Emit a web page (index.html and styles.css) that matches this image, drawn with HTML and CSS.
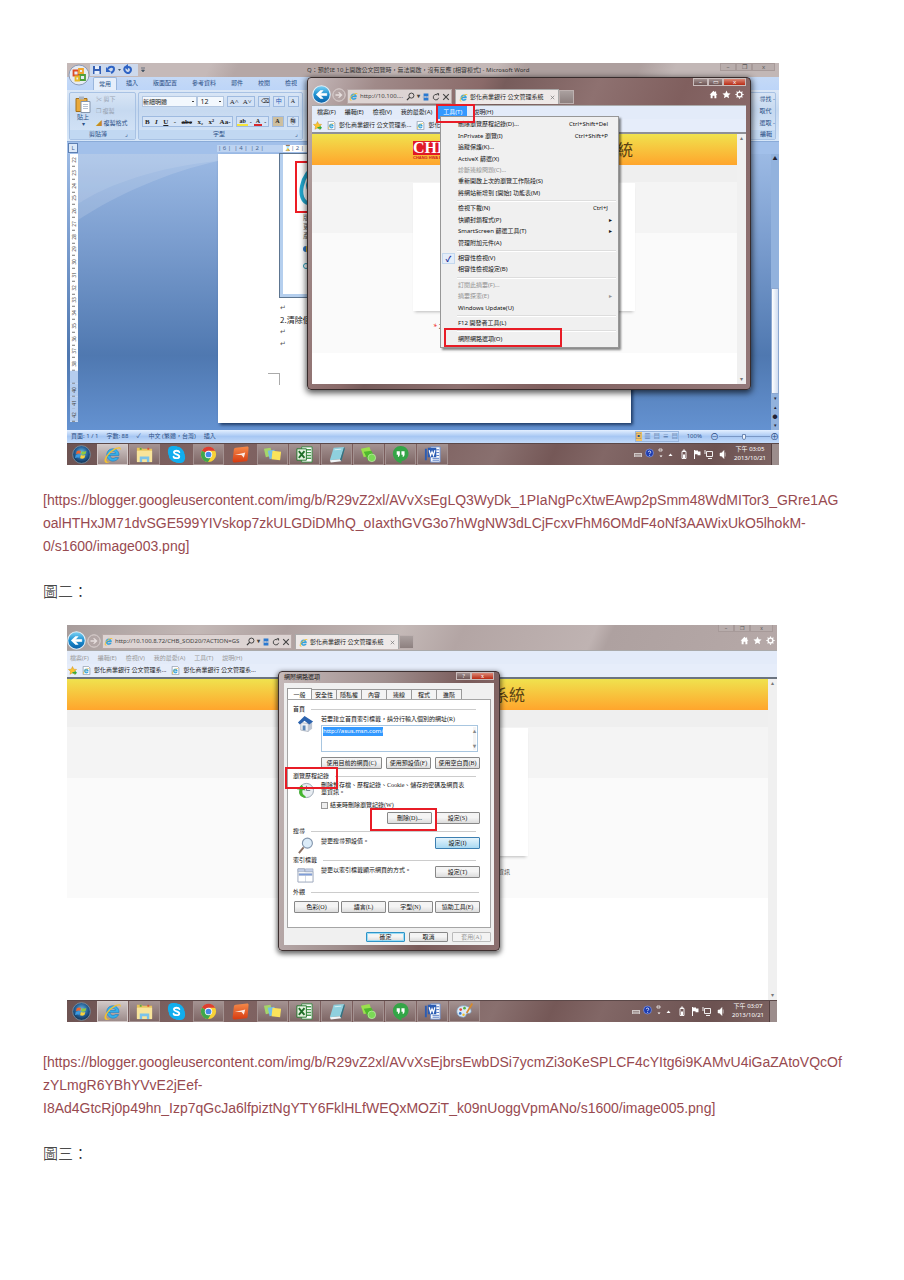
FILE: index.html
```html
<!DOCTYPE html>
<html lang="zh-Hant">
<head>
<meta charset="utf-8">
<title>公文管理系統 設定說明</title>
<link rel="stylesheet" href="styles.css">
</head>
<body>
<svg class="defs" aria-hidden="true">
  <defs>
    <linearGradient id="gb" x1="0" y1="0" x2="0" y2="1"><stop offset="0" stop-color="#7fd4f5"/><stop offset=".5" stop-color="#1c8fd0"/><stop offset="1" stop-color="#0b5fa8"/></linearGradient>
    <radialGradient id="go" cx=".5" cy=".4" r=".6"><stop offset="0" stop-color="#6fc0e8"/><stop offset=".6" stop-color="#235d94"/><stop offset="1" stop-color="#12304f"/></radialGradient>
    <linearGradient id="gr" x1="0" y1="0" x2="0" y2="1"><stop offset="0" stop-color="#f58a4a"/><stop offset="1" stop-color="#d63a10"/></linearGradient>
  </defs>
  <symbol id="ie" viewBox="0 0 20 20"><path d="M4.2 11h12.6c.3-4-2.5-7-6.500-7S4 7 4 10.500 6.800 17 10.500 17c2.800 0 5-1.500 6-3.800h-3.700c-.6.7-1.300 1-2.300 1-1.700 0-2.900-1.200-3-3.200M7.600 8.800c.3-1.400 1.400-2.200 2.800-2.200s2.500.8 2.700 2.200z" fill="#35b0ea" stroke="#1b78be" stroke-width=".6" fill-rule="evenodd"/><path d="M2.500 18.500C-1 16 6 6 14 3c3-1.200 5.500-.8 4.300 2.500C18.200 2.800 15 3.400 11 6 5 10 1.500 16 4.500 17.500c1 .5 2.700-.2 4-1-2.400 2-4.600 2.900-6 2z" fill="#f5c22c"/></symbol>
  <symbol id="favpage" viewBox="0 0 12 12"><path d="M1.500.5h7l2 2v9h-9z" fill="#fff" stroke="#8a97a8"/><use href="#ie" x="1" y="2" width="9" height="9"/></symbol>
  <symbol id="star" viewBox="0 0 12 12"><path d="M6 .7l1.600 3.500 3.800.4-2.800 2.600.8 3.800L6 9.100 2.600 11l.8-3.800L.6 4.600l3.800-.4z" fill="currentColor"/></symbol>
  <symbol id="favadd" viewBox="0 0 12 12"><path d="M6 .7l1.600 3.500 3.800.4-2.800 2.600.8 3.800L6 9.100 2.600 11l.8-3.800L.6 4.600l3.800-.4z" fill="#fbc52d" stroke="#d28d12" stroke-width=".6"/><path d="M6 8h3V6l3 3-3 3v-2H6z" fill="#35ab3b"/></symbol>
  <symbol id="home" viewBox="0 0 12 12"><path d="M6 1L.8 6.200h1.400V11h2.600V7.500h2.400V11h2.600V6.200h1.400L9.500 4.400V2H8v1z" fill="currentColor"/></symbol>
  <symbol id="gear" viewBox="0 0 12 12"><circle cx="6" cy="6" r="3.200" fill="none" stroke="currentColor" stroke-width="1.800"/><path d="M6 .5v2M6 9.500v2M.5 6h2M9.500 6h2M2.100 2.100l1.400 1.400M8.500 8.500l1.400 1.400M9.900 2.100L8.500 3.500M3.500 8.500L2.100 9.900" stroke="currentColor" stroke-width="1.500"/></symbol>
  <symbol id="back" viewBox="0 0 18 18"><circle cx="9" cy="9" r="8.300" fill="url(#gb)" stroke="#e3eef6" stroke-width="1"/><path d="M14 8H8l2.500-2.700H8L4 9l4 3.700h2.500L8 10h6z" fill="#fff" stroke="#fff" stroke-width=".6"/></symbol>
  <symbol id="fwd" viewBox="0 0 14 14"><circle cx="7" cy="7" r="6.200" fill="#b8aaa9" fill-opacity=".5" stroke="#ddd3d2"/><path d="M3.500 6.300h4.200L6 4.200h1.600L10.500 7 7.600 9.800H6l1.700-2.100H3.500z" fill="#e6dedd"/></symbol>
  <symbol id="search" viewBox="0 0 10 10"><circle cx="6" cy="4" r="2.800" fill="none" stroke="#333"/><path d="M4 6L1 9" stroke="#333" stroke-width="1.300"/></symbol>
  <symbol id="compat" viewBox="0 0 10 10"><path d="M2 .5h6v3.700H2zM2 5.800h6v3.700H2z" fill="#2b79d0"/><path d="M1 5h8" stroke="#2b79d0" stroke-dasharray="1 1"/></symbol>
  <symbol id="reload" viewBox="0 0 10 10"><path d="M8.300 6A3.400 3.400 0 1 1 6.500 2.200" fill="none" stroke="#444" stroke-width="1.200"/><path d="M5.500.3h3.300v3.300z" fill="#444"/></symbol>
  <symbol id="x" viewBox="0 0 10 10"><path d="M1.500 1.500l7 7M8.500 1.500l-7 7" stroke="currentColor" stroke-width="1.400"/></symbol>
  <symbol id="orb" viewBox="0 0 20 20"><circle cx="10" cy="10" r="9.300" fill="url(#go)" stroke="#7e99ac" stroke-width=".8"/><path d="M5 6.500c1.700-1 3-.9 4.500-.2L8.700 9.500c-1.500-.7-2.800-.6-4.500.2z" fill="#ee6531"/><path d="M10.300 6.600c1.600.7 3 .6 4.800-.3l-.9 3.300c-1.700.8-3 .9-4.600.2z" fill="#8fca3c"/><path d="M4 10.500c1.700-.8 3-.9 4.500-.2l-.8 3.300c-1.500-.7-3-.6-4.600.2z" fill="#3c9be2"/><path d="M9.300 10.600c1.500.7 3 .6 4.700-.2l-.9 3.300c-1.600.8-3 .9-4.600.2z" fill="#fbd13b"/></symbol>
  <symbol id="office" viewBox="0 0 22 22"><circle cx="11" cy="11" r="10" fill="#e6ebf3" stroke="#8c9cb8"/><g fill="none" stroke-width="1.800"><path d="M5.500 6.500h5v5h-5z" stroke="#dd4a24"/><path d="M11 5h4v4h-4z" stroke="#f0a32c"/><path d="M12 11h5v5h-5z" stroke="#4e9f3a"/><path d="M7.500 12.500h3.500v4H7.500z" stroke="#e6b927"/></g></symbol>
  <symbol id="folder" viewBox="0 0 20 20"><path d="M2 3h5l1 1h10v13H2z" fill="#e9c45d"/><path d="M2 6h16v12H2z" fill="#f8e49b"/><path d="M5 3h2v2H5z" fill="#5aa544"/><path d="M13 3h2v2h-2z" fill="#d4523a"/><path d="M5 18v-6h10v6h-2.500v-3h-5v3z" fill="#7cc3ea"/></symbol>
  <symbol id="skype" viewBox="0 0 20 20"><rect x="1" y="1" width="12" height="12" rx="5" fill="#11aeee"/><rect x="7" y="7" width="12" height="12" rx="5" fill="#11aeee"/><circle cx="10" cy="10" r="8.300" fill="#11aeee"/><path d="M13 7.500C12.500 5.700 7.300 5.400 7.300 7.800c0 2.400 5.600 1.500 5.600 4.200 0 2.600-5.500 2.300-6 .3" fill="none" stroke="#fff" stroke-width="1.900" stroke-linecap="round"/></symbol>
  <symbol id="chrome" viewBox="0 0 20 20"><circle cx="10" cy="10" r="8" fill="#f7d137"/><path d="M10 10L3.100 6A8 8 0 0 1 17 6H10z" fill="#de3e32"/><path d="M3.100 6A8 8 0 0 0 9.500 18L13 12l-3-2z" fill="#3fa64c"/><circle cx="10" cy="10" r="3.900" fill="#fff"/><circle cx="10" cy="10" r="3" fill="#4589e8"/></symbol>
  <symbol id="redapp" viewBox="0 0 20 20"><path d="M5 3l12-1.500c1.200 0 1.500.6 1.500 1.500l-1 12.500c-.1 1-.6 1.500-1.500 1.600L4 18.500c-1.500 0-2.500-1-2.300-2.500L3 5c.2-1.200.8-1.900 2-2z" fill="url(#gr)"/><path d="M4 10.500l11-2.500-1.500 5.500-2.500-3z" fill="#fff" fill-opacity=".85"/></symbol>
  <symbol id="notes" viewBox="0 0 20 20"><path d="M1 4l7-1 2 8-7 2z" fill="#a5d66a"/><path d="M5 6l7-1 2 8-7 2z" fill="#75bde7"/><path d="M10 6l9 1-1 9-9-1z" fill="#fbe35b"/></symbol>
  <symbol id="excel" viewBox="0 0 20 20"><path d="M7 2h11v16H7z" fill="#fff" stroke="#3a8a42"/><path d="M12 5h5M12 8h5M12 11h5M12 14h5" stroke="#4a9e50" stroke-width="1.500"/><path d="M2 4h10v12H2z" fill="#e4f3df" stroke="#26752e"/><path d="M4 6.500l6 7M10 6.500l-6 7" stroke="#1f6e28" stroke-width="2"/></symbol>
  <symbol id="book" viewBox="0 0 20 20"><path d="M7 3l11-1-4 13-11 1z" fill="#8fd0de"/><path d="M3 16l11-1 1 2-11 1.500z" fill="#f1f6f8"/><path d="M14 15l4-13 .8 2L15 17z" fill="#2f7485"/><path d="M8 5l7-.6" stroke="#d6f0f5"/></symbol>
  <symbol id="green" viewBox="0 0 20 20"><path d="M2 4l9-2 3 8-9 3z" fill="#9be04d"/><path d="M5 7l8-1 4 7-7 4z" fill="#50b92e"/><circle cx="13.500" cy="13.500" r="4" fill="#7cd957" stroke="#c6f2b0" stroke-width=".7"/></symbol>
  <symbol id="hang" viewBox="0 0 20 20"><path d="M10 1a8 8 0 0 1 1 16v2.500C6 18 2 14 2 9A8 8 0 0 1 10 1z" fill="#34a547"/><path d="M6 6.500h3.300v3.400c0 1.300-.8 2.300-2 2.700v-2.300H6zM11 6.500h3.300v3.400c0 1.300-.8 2.300-2 2.700v-2.300H11z" fill="#fff"/></symbol>
  <symbol id="word" viewBox="0 0 20 20"><path d="M8 2h10v16H8z" fill="#fff" stroke="#6f8fce"/><path d="M14 5h3M14 8h3M14 11h3M10 14h7M10 16h7" stroke="#4a74c4"/><path d="M2 4h2v12H2zM5 3h9v10H5z" fill="#2b5cb3"/><path d="M6.500 5.500L8 11l1.500-4L11 11l1.500-5.500" fill="none" stroke="#fff" stroke-width="1.300"/></symbol>
  <symbol id="paint" viewBox="0 0 20 20"><path d="M9 4c5 0 8 2.500 8 6 0 2-2 2-4 2s-1 4-4 4c-4 0-7-2-7-6s3-6 7-6z" fill="#dceaf6" stroke="#7da3c5" stroke-width=".8"/><circle cx="6" cy="8" r="1.400" fill="#e04b34"/><circle cx="10" cy="6.500" r="1.400" fill="#52ad41"/><circle cx="5.500" cy="12" r="1.400" fill="#3576cc"/><circle cx="9" cy="13.500" r="1.300" fill="#efbe2e"/><path d="M17.500 1l1.500 1-6 10-1.500-1z" fill="#d78a2b"/></symbol>
  <symbol id="tray" viewBox="0 0 92 12"><path d="M0 5h8v4H0z" fill="#cfc7c6"/><path d="M1 6.500h6M1 8h6" stroke="#7d6b6a" stroke-width=".6"/><circle cx="15.500" cy="5" r="4" fill="#1c3bb0" stroke="#93a8e8" stroke-width=".6"/><path d="M14.300 4.200c0-1.700 2.500-1.500 2.500 0 0 .9-1.200.8-1.200 2M15.600 7v.8" stroke="#fff" fill="none" stroke-width=".8"/><path d="M25 1h3v2h-3z" fill="none" stroke="#fff" stroke-width=".7"/><path d="M25.500 7.500h3L27 9.300z" fill="#fff"/><path d="M34.500 8h4L36.500 5.500z" fill="#fff"/><path d="M48 3.500h4v7h-4zM49.200 2h1.600v1.500h-1.600z" fill="none" stroke="#fff" stroke-width=".9"/><path d="M49 6.500h2V10h-2z" fill="#fff"/><path d="M60.500 2v9" stroke="#fff"/><path d="M61 2.500h3v1h2.500v3.700h-3v-1H61z" fill="#fff"/><path d="M72.500 3.500h6v5h-6zM74 10.500h4M71 2v4" fill="none" stroke="#fff" stroke-width=".9"/><path d="M86 5h1.500l2.500-2.500v8L87.500 8H86zM91.200 4.500v4" fill="#fff" stroke="#fff" stroke-width=".5"/></symbol>
</svg>

<main class="article">
  <figure class="shot">
    <div class="desktop">
      <section class="word">
        <header class="word-title">
          <span class="quick"><svg viewBox="0 0 60 12"><path d="M3 2h8v8H3z" fill="#3560b5"/><path d="M5 2h4v3H5zM4.500 7h5v3h-5z" fill="#e6eefb"/><path d="M18 5c1-3 6-3 6 0 0 2-1 3-3 4" fill="none" stroke="#2e63c4" stroke-width="2"/><path d="M16 3v5h5z" fill="#2e63c4"/><path d="M28 5h3l-1.500 2z" fill="#456"/><path d="M35 3c-3 5 5 9 6 3 0-2-1-3-3-3" fill="none" stroke="#2e63c4" stroke-width="2"/><path d="M38 0v6l-4-3z" fill="#2e63c4"/><path d="M51 4h4M51.500 6h3L53 8z" stroke="#456" stroke-width=".7" fill="#456"/></svg></span>
          <span class="word-name">Q：預於IE 10上開啟公文回覽時，無法開啟，沒有反應 [相容模式] - Microsoft Word</span>
          <span class="caps faint"><button aria-label="最小化">–</button><button aria-label="還原">❐</button><button aria-label="關閉">x</button></span>
        </header>
        <svg class="office"><use href="#office"/></svg>
        <nav class="word-tabs"><button class="on">常用</button><button>插入</button><button>版面配置</button><button>參考資料</button><button>郵件</button><button>校閱</button><button>檢視</button></nav>
        <div class="ribbon">
          <div class="group clip">
            <div class="group-main">
              <button class="paste"><svg viewBox="0 0 16 18"><path d="M1 3h11v13H1z" fill="#e9a93b" stroke="#a4711b"/><path d="M4 1h5v3H4z" fill="#aab5c4"/><path d="M6 6h9v11H6z" fill="#fff" stroke="#8394ac"/><path d="M8 9h5M8 11h5M8 13h5" stroke="#98a8c0" stroke-width=".7"/></svg>貼上<i>▾</i></button>
              <div class="stack"><button disabled>✂ 剪下</button><button disabled>❐ 複製</button><button><b class="brush">◢</b> 複製格式</button></div>
            </div>
            <div class="group-name">剪貼簿<i>⌟</i></div>
          </div>
          <div class="group font">
            <div class="group-main rows">
              <div class="tools"><select class="face" aria-label="字型"><option>新細明體</option></select><select class="size" aria-label="字型大小"><option>12</option></select><span class="set big"><button>A˄</button><button>A˅</button></span><button class="box">⌫</button><button class="box blue">中</button><button class="box">A</button></div>
              <div class="tools serif"><span class="set wide"><button>B</button><button><em>I</em></button><button><u>U</u></button><button>-</button><button><s>abc</s></button><button>x₂</button><button>x²</button><button>Aa-</button></span><span class="set"><button class="hl">ab</button><button>-</button><button class="fc">A</button><button>-</button></span><button class="box shade">A</button><button class="box">㊕</button></div>
            </div>
            <div class="group-name">字型<i>⌟</i></div>
          </div>
          <div class="group edit"><div class="stack"><button>尋找 -</button><button>取代</button><button>選取 -</button></div><div class="group-name">編輯</div></div>
        </div>
        <div class="ruler"><span class="corner">L</span><span class="marks">| 6 | &nbsp;| 4 | &nbsp;| 2 |</span><span class="marks white">⌛| 2 |</span></div>
        <div class="work">
          <div class="vruler"><span>22</span><span>23</span><span>24</span><span>25</span><span>26</span><span>27</span><span>28</span><span>29</span><span>30</span><span>31</span><span>32</span><span>33</span><span>34</span><span>35</span><span>36</span><span>37</span><span>38</span><span class="off"></span><span class="off">40</span><span class="off">41</span><span class="off">42</span></div>
          <svg class="swoosh" viewBox="0 0 140 276" preserveAspectRatio="none"><path d="M0 0H140V7C90 18 40 40 0 66z" fill="#fff" fill-opacity=".14"/><path d="M0 0H140V7C80 13 30 30 0 50z" fill="#fff" fill-opacity=".1"/></svg>
          <div class="page">
            <div class="inset"><div class="mark"><svg viewBox="0 0 20 50"><path d="M20 4C4 8-2 40 12 42c4 0 7-3 8-6M20 14C10 14 6 32 20 28" fill="none" stroke="#22a6cc" stroke-width="4"/></svg></div><p>版<br>更<br>產</p><i class="shield"></i><i class="ring"></i></div>
            <p class="ret">↵</p><p class="step">2.清除個人</p><p class="ret">↵</p><p class="ret">↵</p><i class="edge"></i>
          </div>
          <div class="vscroll"><span>▲</span><i></i><span>▾</span><span>▴</span><span>●</span><span>▾</span></div>
        </div>
        <footer class="status"><span>頁面: 1 / 1</span><span>字數: 88</span><span>✓</span><span>中文 (繁體，台灣)</span><span class="last">插入</span><span class="views"><i class="sel">▣</i><i>▥</i><i>▤</i><i>≡</i><i>▤</i></span><span class="pct">100%</span><label class="zoom">⊖<input type="range" aria-label="顯示比例" value="50">⊕</label></footer>
      </section>

      <section class="ie float">
        <div class="caps"><button aria-label="最小化">–</button><button aria-label="最大化">▭</button><button class="close" aria-label="關閉">x</button></div>
        <header class="ie-nav">
          <button class="bk" aria-label="上一頁"><svg><use href="#back"/></svg></button><button class="fw" aria-label="下一頁"><svg><use href="#fwd"/></svg></button>
          <label class="addr short"><svg><use href="#ie"/></svg><input aria-label="網址" value="http://10.100...."><svg><use href="#search"/></svg><b>▾</b><svg><use href="#compat"/></svg><svg><use href="#reload"/></svg><svg class="dk"><use href="#x"/></svg></label>
          <button class="tab"><svg><use href="#ie"/></svg>彰化商業銀行 公文管理系統<svg class="tx"><use href="#x"/></svg></button><button class="newtab" aria-label="新索引標籤"></button>
          <span class="cmds"><svg><use href="#home"/></svg><svg><use href="#star"/></svg><svg><use href="#gear"/></svg></span>
        </header>
        <nav class="ie-menu"><button>檔案(F)</button><button>編輯(E)</button><button>檢視(V)</button><button>我的最愛(A)</button><button class="on">工具(T)</button><button>說明(H)</button></nav>
        <div class="favs"><svg><use href="#favadd"/></svg><a href="#a"><svg><use href="#favpage"/></svg>彰化商業銀行 公文管理系...</a><a href="#b"><svg><use href="#favpage"/></svg>彰化</a></div>
        <div class="view">
          <div class="site"><div class="banner"><div class="logo"><b>CHB</b><small>CHANG HWA BANK</small></div><h1>統</h1></div><div class="band"></div><div class="mid"><div class="card"></div></div><div class="low"><span class="note"><em>*</em> 2</span></div></div>
          <div class="scroll"><span>▴</span><span>▾</span></div>
        </div>
      </section>

      <ul class="drop float">
        <li><span>刪除瀏覽歷程記錄(D)...</span><kbd>Ctrl+Shift+Del</kbd></li>
        <li><span>InPrivate 瀏覽(I)</span><kbd>Ctrl+Shift+P</kbd></li>
        <li><span>追蹤保護(K)...</span></li>
        <li><span>ActiveX 篩選(X)</span></li>
        <li class="dis"><span>診斷連線問題(C)...</span></li>
        <li><span>重新開啟上次的瀏覽工作階段(S)</span></li>
        <li><span>將網站新增到 [開始] 功能表(M)</span></li>
        <li class="sep"></li>
        <li><span>檢視下載(N)</span><kbd>Ctrl+J</kbd></li>
        <li class="sub"><span>快顯封鎖程式(P)</span></li>
        <li class="sub"><span>SmartScreen 篩選工具(T)</span></li>
        <li><span>管理附加元件(A)</span></li>
        <li class="sep"></li>
        <li class="check"><span>相容性檢視(V)</span></li>
        <li><span>相容性檢視設定(B)</span></li>
        <li class="sep"></li>
        <li class="dis"><span>訂閱此摘要(F)...</span></li>
        <li class="dis sub"><span>摘要探索(E)</span></li>
        <li><span>Windows Update(U)</span></li>
        <li class="sep"></li>
        <li><span>F12 開發者工具(L)</span></li>
        <li class="sep"></li>
        <li><span>網際網路選項(O)</span></li>
      </ul>
      <i class="red r1"></i><i class="red r2"></i>
    </div>
    <footer class="taskbar">
      <svg class="t start"><use href="#orb"/></svg><svg class="t act"><use href="#ie"/></svg><svg class="t run"><use href="#folder"/></svg><svg class="t"><use href="#skype"/></svg><svg class="t run"><use href="#chrome"/></svg><svg class="t"><use href="#redapp"/></svg><svg class="t run"><use href="#notes"/></svg><svg class="t run"><use href="#excel"/></svg><svg class="t run"><use href="#book"/></svg><svg class="t run"><use href="#green"/></svg><svg class="t run"><use href="#hang"/></svg><svg class="t run"><use href="#word"/></svg>
      <svg class="tray"><use href="#tray"/></svg><time>下午 03:05<br>2013/10/21</time><i class="show"></i>
    </footer>
  </figure>

  <p class="url"><a href="#image003">[https://blogger.googleusercontent.com/img/b/R29vZ2xl/AVvXsEgLQ3WyDk_1PIaNgPcXtwEAwp2pSmm48WdMITor3_GRre1AG<br>oalHTHxJM71dvSGE599YIVskop7zkULGDiDMhQ_oIaxthGVG3o7hWgNW3dLCjFcxvFhM6OMdF4oNf3AAWixUkO5lhokM-<br>0/s1600/image003.png]</a></p>
  <p class="cap">圖二：</p>

  <figure class="shot second">
    <div class="desktop full">
      <section class="ie max">
        <div class="caps faint"><button aria-label="最小化">–</button><button aria-label="還原">❐</button><button aria-label="關閉">x</button></div>
        <header class="ie-nav">
          <button class="bk" aria-label="上一頁"><svg><use href="#back"/></svg></button><button class="fw" aria-label="下一頁"><svg><use href="#fwd"/></svg></button>
          <label class="addr"><svg><use href="#ie"/></svg><input aria-label="網址" value="http://10.100.8.72/CHB_SOD20/?ACTION=GS"><svg><use href="#search"/></svg><b>▾</b><svg><use href="#compat"/></svg><svg><use href="#reload"/></svg><svg class="dk"><use href="#x"/></svg></label>
          <button class="tab"><svg><use href="#ie"/></svg>彰化商業銀行 公文管理系統<svg class="tx"><use href="#x"/></svg></button><button class="newtab" aria-label="新索引標籤"></button>
          <span class="cmds"><svg><use href="#home"/></svg><svg><use href="#star"/></svg><svg><use href="#gear"/></svg></span>
        </header>
        <nav class="ie-menu gray"><button>檔案(F)</button><button>編輯(E)</button><button>檢視(V)</button><button>我的最愛(A)</button><button>工具(T)</button><button>說明(H)</button></nav>
        <div class="favs"><svg><use href="#favadd"/></svg><a href="#c"><svg><use href="#favpage"/></svg>彰化商業銀行 公文管理系...</a><a href="#d"><svg><use href="#favpage"/></svg>彰化商業銀行 公文管理系...</a></div>
        <div class="view">
          <div class="site"><div class="banner"><h1>系統</h1></div><div class="band"></div><div class="mid"><div class="card"></div></div><div class="low"><span class="note">資訊</span></div></div>
          <div class="scroll"><span>▴</span><span>▾</span></div>
        </div>
      </section>

      <section class="dialog float">
        <header><span>網際網路選項</span><span class="caps"><button aria-label="說明">?</button><button class="close" aria-label="關閉">x</button></span></header>
        <div class="client">
          <nav class="tabs"><button class="on">一般</button><button>安全性</button><button>隱私權</button><button>內容</button><button>連線</button><button>程式</button><button>進階</button></nav>
          <div class="panel">
            <fieldset class="s1"><legend>首頁</legend>
              <svg class="pic" viewBox="0 0 18 18"><path d="M4 8v8l8 1.500V9z" fill="#eef1f5" stroke="#8590a0" stroke-width=".6"/><path d="M12 9v8.500l4-3V7z" fill="#bcc5d3"/><path d="M1 8l7-7 9 6-4 3-5-4-5 4z" fill="#2b63ae"/><path d="M6 11h3v5.500l-3-.5z" fill="#5b87b8"/></svg>
              <div class="body"><label for="home-url">若要建立首頁索引標籤，請分行輸入個別的網址(R)</label>
                <div class="ta" id="home-url" role="textbox" contenteditable="true"><mark>http://asus.msn.com/</mark><span class="arrows"><b>▴</b><b>▾</b></span></div>
                <div class="btns"><button class="w60">使用目前的網頁(C)</button><button>使用預設值(F)</button><button>使用空白頁(B)</button></div></div>
            </fieldset>
            <fieldset class="s2"><legend>瀏覽歷程記錄</legend>
              <svg class="pic" viewBox="0 0 18 18"><circle cx="10" cy="9" r="7.500" fill="#e8edf2" stroke="#98a5b1"/><path d="M10 4v5h4" fill="none" stroke="#6c7b8a"/><path d="M9 17C3 16 1 12 3 8L0 8l5-5 4 6-3-.5C5 11 6 14 9 15z" fill="#45b531"/></svg>
              <div class="body"><p>刪除暫存檔、歷程記錄、Cookie、儲存的密碼及網頁表<br>單資訊。</p>
                <label class="tick"><input type="checkbox">結束時刪除瀏覽記錄(W)</label>
                <div class="btns right"><button>刪除(D)...</button><button>設定(S)</button></div></div>
            </fieldset>
            <fieldset class="s3"><legend>搜尋</legend>
              <svg class="pic" viewBox="0 0 18 18"><circle cx="11" cy="6.500" r="5.300" fill="#dcecf9" stroke="#8496ad" stroke-width="1.200"/><path d="M7 11l-5 6" stroke="#8b6f62" stroke-width="2"/></svg>
              <div class="body line"><p>變更搜尋預設值。</p><button class="hot">設定(I)</button></div>
            </fieldset>
            <fieldset class="s4"><legend>索引標籤</legend>
              <svg class="pic" viewBox="0 0 18 18"><path d="M1 3h7v3h9v11H1z" fill="#fff" stroke="#9aa6ba"/><path d="M1 3h7v3H1zM9 3h8v3H9z" fill="#c4cfe8" stroke="#9aa6ba" stroke-width=".6"/><path d="M2 8h14v2H2zM9 10v7" fill="#7f9ddb" stroke="#a8b3c9" stroke-width=".5"/></svg>
              <div class="body line"><p>變更以索引標籤顯示網頁的方式。</p><button>設定(T)</button></div>
            </fieldset>
            <fieldset class="s5"><legend>外觀</legend>
              <div class="btns four"><button>色彩(O)</button><button>語言(L)</button><button>字型(N)</button><button>協助工具(E)</button></div>
            </fieldset>
          </div>
          <div class="foot"><button class="def">確定</button><button>取消</button><button disabled>套用(A)</button></div>
        </div>
      </section>
      <i class="red r3"></i><i class="red r4"></i>
    </div>
    <footer class="taskbar">
      <svg class="t start"><use href="#orb"/></svg><svg class="t act"><use href="#ie"/></svg><svg class="t run"><use href="#folder"/></svg><svg class="t"><use href="#skype"/></svg><svg class="t run"><use href="#chrome"/></svg><svg class="t"><use href="#redapp"/></svg><svg class="t run"><use href="#notes"/></svg><svg class="t run"><use href="#excel"/></svg><svg class="t run"><use href="#book"/></svg><svg class="t run"><use href="#green"/></svg><svg class="t run"><use href="#hang"/></svg><svg class="t run"><use href="#word"/></svg><svg class="t run"><use href="#paint"/></svg>
      <svg class="tray"><use href="#tray"/></svg><time>下午 03:07<br>2013/10/21</time><i class="show"></i>
    </footer>
  </figure>

  <p class="url"><a href="#image005">[https://blogger.googleusercontent.com/img/b/R29vZ2xl/AVvXsEjbrsEwbDSi7ycmZi3oKeSPLCF4cYItg6i9KAMvU4iGaZAtoVQcOf<br>zYLmgR6YBhYVvE2jEef-<br>I8Ad4GtcRj0p49hn_Izp7qGcJa6lfpiztNgYTY6FklHLfWEQxMOZiT_k09nUoggVpmANo/s1600/image005.png]</a></p>
  <p class="cap">圖三：</p>
</main>
</body>
</html>
```
FILE: styles.css
```css
* { box-sizing: border-box; }
body { margin: 0; background: #fff; color: #222; font-family: "Liberation Sans", "Noto Sans CJK TC", sans-serif; }
button, input, select { font: inherit; color: inherit; margin: 0; padding: 0; border: 0; background: none; white-space: nowrap; }
p, ul, h1, figure { margin: 0; padding: 0; }
i { font-style: normal; }
.defs { position: absolute; width: 0; height: 0; }

.article { padding: 63px 24px 0 43px; }
.shot { width: 712px; max-width: 100%; margin-left: 24px; font: 6px/9px "Noto Sans", "Noto Sans CJK TC", sans-serif; }
.second { width: 710px; }
.url { padding-top: 24px; font-size: 14px; line-height: 23px; }
.second + .url { padding-top: 29px; }
.url a { color: #984a50; text-decoration: none; white-space: nowrap; }
.cap { padding: 21px 0 23px; font: 300 15px/23px "Noto Sans CJK TC", sans-serif; }

.desktop { position: relative; height: 380px; overflow: hidden; }
.full { height: 375px; }
.float { position: absolute; }

/* Word */
.word { display: flex; flex-direction: column; height: 100%; background: #bfdbff; color: #2b4f86; }
.word-title { display: flex; align-items: center; height: 14px; background: linear-gradient(115deg, #c5b9b8 0 20%, #b5a7a6 24% 40%, #c4b8b7 45% 60%, #ad9f9e 64% 80%, #c2b7b6 85%); color: #333; }
.quick { width: 240px; padding-left: 23px; height: 12px; }
.quick svg { width: 60px; height: 12px; background: linear-gradient(90deg, #cdd9ec 48px, transparent 48px); border-radius: 0 8px 8px 0; }
.word-name { flex: 1; font-size: 6px; }
.office { position: absolute; left: 1px; top: 1px; width: 22px; height: 22px; z-index: 1; }
.caps { display: flex; }
.caps button { width: 15px; height: 8px; line-height: 6px; border: 1px solid #c9bcbb; color: #fff; background: linear-gradient(#a39291, #6e5554); }
.caps .close { width: 23px; background: linear-gradient(#dc8a78, #b92a14); }
.faint { height: 10px; align-self: flex-start; padding-right: 4px; }
.faint button { width: 16px; color: #555; background: #b8adac; border-color: #a79a99; }
.faint button:last-child { width: 23px; }
.word-tabs { display: flex; gap: 3px; height: 13px; padding-left: 26px; background: linear-gradient(#c4d9f6, #bdd5f8); }
.word-tabs button { padding: 0 6px; }
.word-tabs .on { padding: 0 5px; background: #e6effb; border: 1px solid #9ab6dc; border-bottom: 0; border-radius: 2px 2px 0 0; }
.ribbon { display: flex; gap: 2px; height: 52px; padding: 2px 3px 1px 2px; background: linear-gradient(#dbe7f6, #c6d9f0 40%, #d6e6f8); border-bottom: 1px solid #8aabd8; }
.group { display: flex; flex-direction: column; border: 1px solid #a8c2e4; border-radius: 2px; }
.clip { width: 67px; } .font { width: 165px; }
.edit { width: 46px; margin-left: auto; align-items: flex-end; }
.group-main { flex: 1; display: flex; gap: 3px; padding: 0 3px; }
.group-name { display: flex; justify-content: center; gap: 18px; height: 9px; padding-left: 12px; background: #c1d8f2; line-height: 8px; }
.font .group-name { gap: 70px; padding-left: 70px; }
.edit .group-name { width: 100%; justify-content: flex-end; padding-right: 3px; }
.paste { width: 20px; line-height: 7px; display: flex; flex-direction: column; align-items: center; padding-top: 2px; }
.paste svg { width: 16px; height: 19px; }
.stack { display: flex; flex-direction: column; justify-content: space-around; flex: 1; align-items: flex-start; }
.stack button:disabled { color: #9aa5b3; }
.brush { color: #c58a25; }
.rows { flex-direction: column; justify-content: space-around; }
.tools { display: flex; gap: 3px; height: 11px; color: #222; }
.tools button, .tools select { line-height: 8px; }
.face, .size { appearance: none; border: 1px solid #b3c7e1; background: #f3f8fd linear-gradient(#444, #444) right 2px center / 2px 1px no-repeat; }
.tools .face { width: 64px; } .tools .size { width: 30px; margin-left: -3px; padding-left: 2px; font-size: 7px; }
.set, .box { border: 1px solid #9ebae0; background: #d4e3f6; display: flex; font-family: "Liberation Serif", "Noto Sans CJK TC", serif; }
.set button { padding: 0 2px; }
.big { font-size: 7px; }
.tools .box { width: 12px; padding: 0 2px; }
.blue { color: #2358b4; }
.serif { font-family: "Liberation Serif", "Noto Sans CJK TC", serif; font-weight: bold; }
.wide { width: 94px; justify-content: space-between; font-size: 7px; }
.set .hl { border-bottom: 2px solid #f5e43c; } .set .fc { border-bottom: 2px solid #d8272c; }
.tools .shade { background: #cdbf9f; }
.ruler { display: flex; align-items: center; height: 12px; background: #a2c0ea; color: #47648f; padding-left: 1px; font-size: 5px; }
.corner { width: 10px; height: 10px; border: 1px solid #5d7fb2; background: #dce9f9; text-align: center; font-size: 6px; }
.marks { margin-left: 139px; width: 66px; height: 7px; padding-left: 1px; font-size: 6px; line-height: 7px; background: #bdd3f1; white-space: nowrap; }
.white { margin-left: 0; background: #fff; }
.work { flex: 1; display: flex; position: relative; background: linear-gradient(#9cbae4, #7d9fd0 30%, #4f78b0 73%, #6492d1); }
.vruler { display: flex; flex-direction: column; width: 8px; margin: 0 0 8px 3px; background: #fff; color: #444; font-size: 5px; }
.vruler span { flex: 1; writing-mode: vertical-rl; transform: rotate(180deg); line-height: 8px; text-align: center; background: linear-gradient(#777, #777) center top / 3px 1px no-repeat; }
.vruler .off { background-color: #b5cdee; }
.swoosh { width: 140px; height: 276px; }
.page { width: 413px; margin-bottom: 7px; padding: 0 0 0 62px; background: #fff; box-shadow: 2px 2px 3px #1f3b66; color: #222; }
.inset { width: 60px; height: 143px; margin-bottom: 5px; padding: 7px 0 0 12px; border: 3px solid #b5cfee; border-top: 0; outline: 1px solid #5d7590; color: #666; font-size: 7px; line-height: 9px; }
.mark { width: 60px; height: 52px; border: 2px solid #ed1c24; background: #fff; }
.mark svg { width: 20px; height: 48px; }
.inset p { padding-left: 8px; }
.shield, .ring { display: block; width: 6px; height: 6px; margin: 6px 0 0 8px; border-radius: 3px; background: linear-gradient(90deg, #2f74c0 50%, #ddb835 50%); }
.ring { margin-top: 11px; background: none; border: 1px solid #2399b5; }
.ret { font-size: 7px; line-height: 12px; color: #555; }
.step { font: 8px/12px "Noto Sans CJK TC", sans-serif; }
.edge { display: block; width: 12px; height: 12px; margin: 23px 0 0 -12px; border: solid #aaa; border-width: 1px 1px 0 0; }
.vscroll { display: flex; flex-direction: column; width: 8px; margin-left: auto; background: #92b2dd; font-size: 5px; text-align: center; color: #223; }
.vscroll i { height: 106px; margin-top: auto; background: linear-gradient(90deg, #fff, #cfdcf0); border: 1px solid #8da8d0; }
.status { display: flex; align-items: center; gap: 8px; height: 13px; padding: 0 0 0 4px; background: linear-gradient(#e3efff, #a7c7f3 50%, #c4dbfa); }
.last { flex: 1; }
.views { display: flex; gap: 3px; border: 1px solid #9ab7df; } .sel { background: #f6c465; }
.zoom { display: flex; align-items: center; font-size: 9px; }
.zoom input { appearance: none; width: 51px; height: 7px; background: linear-gradient(#7a98c6, #7a98c6) center / 100% 1px no-repeat; }
.zoom input::-webkit-slider-thumb { appearance: none; width: 4px; height: 6px; border: 1px solid #6c87b2; border-radius: 0 0 2px 2px; background: #eef4fc; }

/* Browser */
.ie { display: flex; flex-direction: column; background: #8a6f6e; color: #222; }
.ie.float { left: 240px; top: 14px; width: 444px; height: 313px; padding: 0 4px 5px; border: 1px solid #382c2c; border-radius: 4px; box-shadow: 0 2px 6px 1px #000a; background: linear-gradient(115deg, #c6babb 0, #a08a89 12%, #8a6a69 30%, #775c5b 34%, #8e7170 50%, #805f5e 65%, #94797a); }
.ie > .caps { height: 7px; justify-content: flex-end; }
.ie-nav { display: flex; align-items: center; height: 20px; gap: 1px; padding: 0 2px 1px 0; }
.ie-nav svg { width: 9px; height: 9px; flex: none; }
.ie-nav .bk svg { width: 19px; height: 19px; display: block; } .ie-nav .fw svg { width: 14px; height: 14px; display: block; }
.addr { display: flex; align-items: center; gap: 2px; width: 190px; height: 15px; margin-right: 2px; padding: 0 1px; align-self: flex-end; background: #ddd4d3; border: 1px solid #b7a9a8; color: #444; }
.short { width: 105px; }
.addr input { flex: 1; width: 20px; min-width: 0; }
.ie-nav .addr svg + b ~ svg { width: 8px; height: 8px; }
.tab { display: flex; align-items: center; gap: 2px; width: 104px; height: 15px; padding: 0 3px; align-self: flex-end; background: #eee9e8; border: 1px solid #aaa; border-bottom: 0; }
.ie-nav .tx { width: 5px; height: 5px; margin-left: auto; color: #777; }
.newtab { width: 15px; height: 14px; margin-left: -1px; align-self: flex-end; background: linear-gradient(#aaa09f, #8d807f); border: 1px solid #bdb1b0; }
.cmds { display: flex; gap: 4px; margin-left: auto; color: #fff; }
.ie-menu { display: flex; height: 14px; background: #e3ebf9; padding-left: 2px; gap: 3px; border-top: 1px solid #aaa; }
.ie-menu button { padding: 0 3px; }
.ie-menu .on { padding: 0 5px; background: #3399ff; color: #fff; }
.ie-menu.gray { padding-left: 0; color: #9a9a9a; line-height: 8px; }
.favs { display: flex; align-items: center; gap: 5px; height: 15px; padding-left: 1px; background: #e6edfa; border-bottom: 2px solid #8f9097; }
.favs svg { width: 9px; height: 9px; }
.favs a { display: flex; align-items: center; gap: 3px; color: inherit; text-decoration: none; white-space: nowrap; }
.view { flex: 1; display: flex; background: #fff; min-height: 0; }
.site { flex: 1; }
.scroll { display: flex; flex-direction: column; justify-content: space-between; width: 9px; background: #f0f0f0; text-align: center; color: #777; }
.banner { display: flex; justify-content: space-between; height: 31px; padding: 0 104px 0 101px; background: linear-gradient(#f0e24e, #ffa52c); }
.logo { padding-top: 7px; width: 44px; }
.logo b { display: block; background: #e01926; color: #fff; font: bold 16px/14px "Liberation Serif", serif; }
.logo small { display: block; font: bold 4px/6px "Liberation Sans", sans-serif; color: #d01c20; white-space: nowrap; }
.banner h1 { font: 16px/31px "Noto Sans CJK TC", sans-serif; color: #5a4314; }
.band { height: 17px; background: #efefef; }
.mid { height: 51px; padding: 1px 102px 0 101px; background: #f4f4f4; }
.card { position: relative; height: 128px; background: #fff; box-shadow: 0 3px 3px -2px #bbb; }
.low { height: 120px; padding: 89px 0 0 121px; background: #fafafa; font-size: 7px; color: #555; }
.low em { color: #e22; }

.drop { left: 373px; top: 53px; width: 179px; height: 232px; display: flex; flex-direction: column; padding: 2px; list-style: none; background: #f0f0f0; border: 1px solid #979797; box-shadow: 2px 2px 2px #0007; color: #111; }
.drop li { flex: 1; display: flex; justify-content: space-between; align-items: center; padding: 0 8px 0 15px; white-space: nowrap; }
.drop .sep { flex: none; height: 4px; margin-left: 14px; padding: 0; background: linear-gradient(#0000 1px, #ddd 1px 2px, #fff 2px 3px, #0000 3px); }
.drop kbd { font: inherit; }
.drop .dis { color: #929292; }
.drop .sub { padding-right: 4px; }
.drop .sub::after { content: "▸"; }
.drop .check { justify-content: flex-start; padding-left: 0; }
.drop .check::before { content: "✓"; width: 11px; margin-right: 4px; text-align: center; font-size: 8px; font-weight: bold; color: #1c2f9c; background: #e4edf9; outline: 1px solid #c4d8ee; }

.red { position: absolute; border: 2px solid #e81c26; }
.r1 { left: 369px; top: 41px; width: 39px; height: 19px; }
.r2 { left: 377px; top: 265px; width: 118px; height: 19px; }
.r3 { left: 218px; top: 142px; width: 53px; height: 22px; }
.r4 { left: 303px; top: 183px; width: 67px; height: 23px; }

/* Maximised window */
.max { height: 100%; background: linear-gradient(115deg, #a79c9b, #c3b8b6 15%, #aea09f 25%, #c4b9b7 38%, #b3a5a4 45%, #bfb3b2 60%, #aea1a0 62%, #bdb0af); }
.max > .caps { align-self: stretch; }
.max > .caps button { height: 7px; line-height: 5px; font-size: 5px; border-top: 0; }
.max .ie-nav { height: 18px; }
.max .favs { border-bottom-color: #6b7480; }
.max .banner { justify-content: flex-end; padding-right: 243px; }
.max .mid { padding: 1px 240px 0 320px; }
.max .low { padding: 90px 0 0 431px; font-size: 6px; }

/* Options dialog */
.dialog { left: 211px; top: 46px; width: 222px; height: 280px; display: flex; flex-direction: column; padding: 0 5px 5px; background: linear-gradient(100deg, #c5b9b9, #a08f8e 40%, #795b5a 70%, #8c7070); border: 1px solid #3d3030; border-radius: 4px; box-shadow: 0 2px 5px 1px #0009; color: #111; font-family: "Liberation Serif", "Noto Sans CJK TC", serif; }
.dialog header { display: flex; justify-content: space-between; align-items: center; height: 13px; }
.dialog header .caps { align-self: flex-start; }
.client { flex: 1; display: flex; flex-direction: column; padding: 5px 3px 3px; background: #f0f0f0; }
.tabs { display: flex; height: 11px; }
.tabs button { width: 25px; height: 10px; margin-top: 1px; border: 1px solid #999; border-width: 1px 1px 0 0; background: #f3f3f3; line-height: 8px; }
.tabs .on { height: 12px; margin-top: 0; background: #fff; border-left-width: 1px; }
.panel { display: flex; flex-direction: column; background: #fff; border: 1px solid #a5a5a5; height: 229px; padding: 3px 10px 0 5px; }
.dialog fieldset { display: flex; gap: 7px; margin: 0; border: 0; padding: 0 0 0 4px; min-width: 0; }
.dialog legend { display: flex; align-items: center; gap: 6px; width: 100%; height: 12px; padding: 0; margin-left: -4px; white-space: nowrap; }
.dialog legend::after { content: ""; flex: 1; height: 1px; background: #ccc; }
.pic { width: 17px; height: 17px; flex: none; }
.body { flex: 1; display: flex; flex-direction: column; min-width: 0; white-space: nowrap; }
.s1 { height: 67px; } .s2 { height: 55px; } .s3 { height: 29px; } .s4 { height: 32px; } .s5 { height: 30px; }
.dialog .s5 { padding-left: 1px; }
.dialog .s5 legend { margin-left: -1px; }
.s2 .body { line-height: 7px; }
.ta { display: flex; justify-content: space-between; height: 27px; margin: 1px 2px 5px 0; padding: 1px; border: 1px solid #a8c6e0; font: 6px/8px "Noto Sans", sans-serif; }
.ta mark { height: 9px; background: #3399ff; color: #fff; }
.arrows { display: flex; flex-direction: column; justify-content: space-between; background: #f4f4f4; color: #888; }
.btns { display: flex; gap: 3px; justify-content: space-between; }
.dialog .btns button, .line button, .foot button { flex: none; width: 45px; height: 12px; line-height: 9px; border: 1px solid #888; border-radius: 1px; background: linear-gradient(#f4f4f4 45%, #dcdcdc); }
.dialog .btns .w60 { width: 61px; }
.right { justify-content: flex-end; margin-top: 3px; }
.tick { display: flex; align-items: center; gap: 2px; height: 8px; margin-top: 5px; }
.tick input { appearance: none; width: 7px; height: 7px; border: 1px solid #999; background: #eee; }
.line { flex-direction: row; justify-content: space-between; align-items: flex-start; }
.dialog .line .hot { border-color: #3c7fb1; background: linear-gradient(#e5f4fc, #a9d9f2); }
.four { width: 100%; padding-top: 3px; }
.dialog .four { gap: 2px; }
.foot { display: flex; justify-content: flex-end; gap: 4px; padding-top: 4px; }
.foot button { width: 39px; height: 10px; line-height: 7px; }
.foot .def { border-color: #2f94c8; box-shadow: inset 0 0 0 1px #9bdcf5; }
.foot button:disabled { color: #999; border-color: #bbb; background: #f3f3f3; }

/* Taskbar */
.taskbar { display: flex; align-items: stretch; height: 22px; background: linear-gradient(115deg, #6d5352, #806463 20%, #7a5c5b 45%, #89706f 60%, #755857 68%, #826766 75%, #6c5251 90%, #7d6463); border-top: 1px solid #5b4848; color: #fff; }
.t { width: 31px; height: 21px; padding: 0 5px; margin-right: 1px; border: 1px solid transparent; flex: none; }
.start { width: 29px; padding: 0 3px; }
.run { border-color: #a39190; background: linear-gradient(#a39190, #7e6665); }
.act { border-color: #d4cac9; background: linear-gradient(#d0c7c6, #9c8b8a); }
.tray { width: 92px; height: 12px; margin: 4px 8px 0 auto; }
.taskbar time { padding-top: 1px; text-align: center; }
.show { width: 8px; margin-left: 5px; background: #9c8d8c; border-left: 1px solid #544040; }
```
